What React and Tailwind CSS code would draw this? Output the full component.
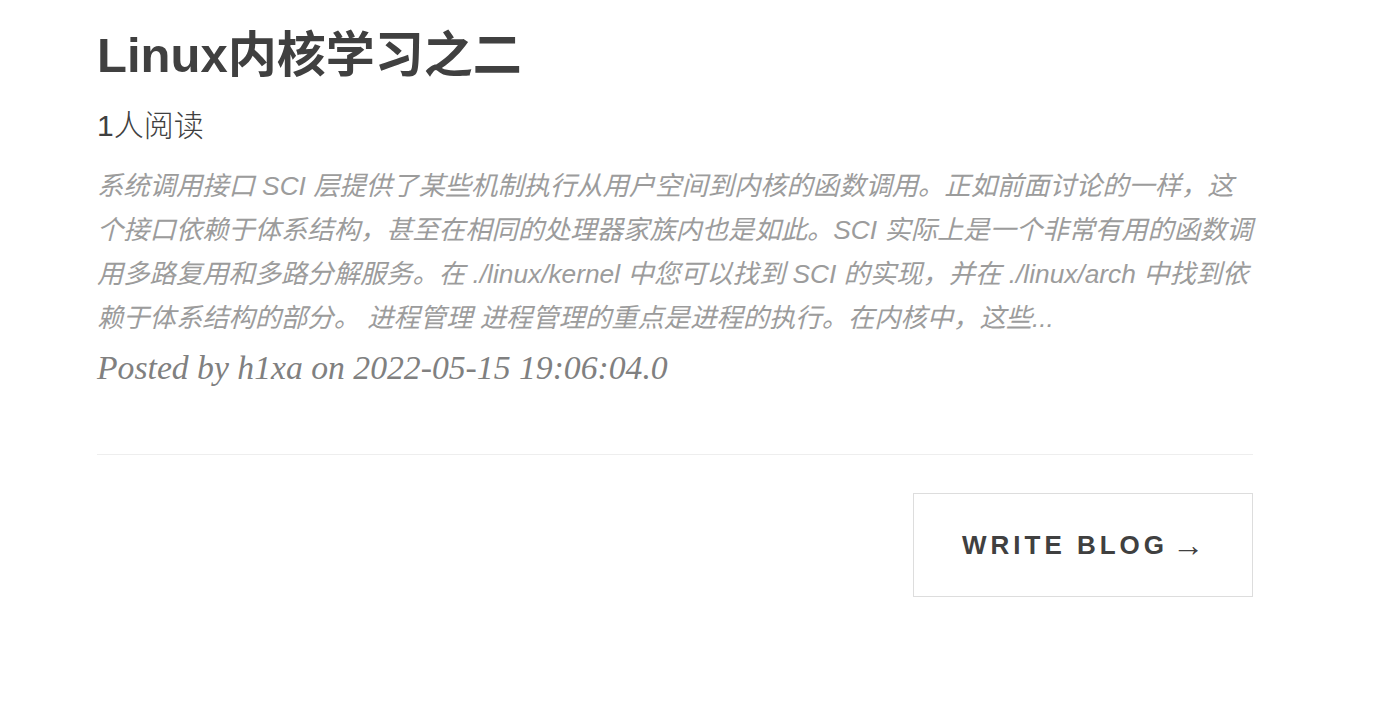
export default function App() {
  return (
    <div className="min-h-screen bg-white font-['Liberation_Sans','Noto_Sans_CJK_SC',sans-serif]">
      <div className="ml-[97px] w-[1156px] pt-[28px]">
        <h2 className="text-[49px] font-bold leading-[55px] text-[#404040]">Linux内核学习之二</h2>
        <h3 className="mt-[25px] text-[30px] leading-[36px] font-light text-[#404040]">1人阅读</h3>
        <p className="mt-[20px] text-[26.3px] leading-[44px] italic text-[#9c9c9c]">
          系统调用接口 SCI 层提供了某些机制执行从用户空间到内核的函数调用。正如前面讨论的一样，这个接口依赖于体系结构，甚至在相同的处理器家族内也是如此。SCI 实际上是一个非常有用的函数调用多路复用和多路分解服务。在 ./linux/kernel 中您可以找到 SCI 的实现，并在 ./linux/arch 中找到依赖于体系结构的部分。 进程管理 进程管理的重点是进程的执行。在内核中，这些...
        </p>
        <p className="mt-[8px] font-['Liberation_Serif',serif] text-[33.7px] leading-[40px] italic text-[#808080]">
          Posted by h1xa on 2022-05-15 19:06:04.0
        </p>
        <hr className="mt-[66px] border-0 border-t border-[#eeeeee]" />
        <div className="mt-[38px] flex justify-end">
          <a
            href="#"
            className="flex h-[104px] w-[340px] items-center justify-center border border-[#dddddd] text-[26px] font-bold uppercase tracking-[4px] text-[#404040]"
          >
            Write Blog <span className="ml-[4px] text-[32px] leading-none font-normal tracking-normal">→</span>
          </a>
        </div>
      </div>
    </div>
  )
}
